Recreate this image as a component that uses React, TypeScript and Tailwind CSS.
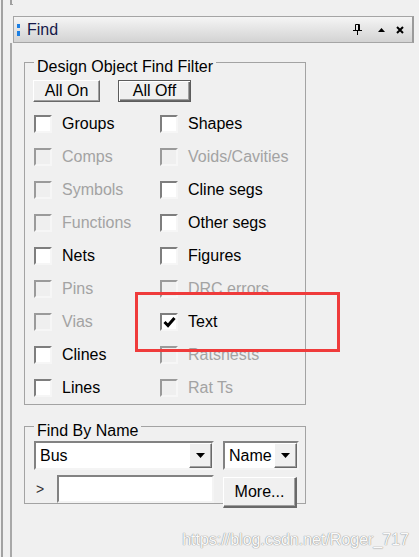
import React from "react";

type Item = { label: string; enabled: boolean; checked?: boolean };

const left: Item[] = [
  { label: "Groups", enabled: true },
  { label: "Comps", enabled: false },
  { label: "Symbols", enabled: false },
  { label: "Functions", enabled: false },
  { label: "Nets", enabled: true },
  { label: "Pins", enabled: false },
  { label: "Vias", enabled: false },
  { label: "Clines", enabled: true },
  { label: "Lines", enabled: true },
];

const right: Item[] = [
  { label: "Shapes", enabled: true },
  { label: "Voids/Cavities", enabled: false },
  { label: "Cline segs", enabled: true },
  { label: "Other segs", enabled: true },
  { label: "Figures", enabled: true },
  { label: "DRC errors", enabled: false },
  { label: "Text", enabled: true, checked: true },
  { label: "Ratsnests", enabled: false },
  { label: "Rat Ts", enabled: false },
];

const raised =
  "border border-t-white border-l-white border-r-[#696969] border-b-[#696969] shadow-[inset_-1px_-1px_0_#a0a0a0] bg-[#f0f0f0]";
const sunken =
  "border-2 border-t-[#828282] border-l-[#828282] border-r-[#f4f4f4] border-b-[#f4f4f4] bg-white";

function CheckRow({ item }: { item: Item }) {
  return (
    <div className="flex h-[33px] items-center gap-[10px]">
      <div
        className={`flex h-[18px] w-[18px] items-center justify-center border-2 border-r-[#f6f6f6] border-b-[#f6f6f6] ${
          item.enabled
            ? "border-t-[#7e7e7e] border-l-[#7e7e7e] bg-white"
            : "border-t-[#9a9a9a] border-l-[#9a9a9a] bg-[#efefef]"
        }`}
      >
        {item.checked && (
          <svg width="13" height="12" viewBox="0 0 13 12">
            <path d="M1.5 6 L5 9.5 L11.5 2" fill="none" stroke="#000" strokeWidth="3" />
          </svg>
        )}
      </div>
      <span className={item.enabled ? "text-black" : "text-[#a3a3a3]"}>{item.label}</span>
    </div>
  );
}

function Arrow() {
  return (
    <div className={`${raised} flex h-full w-[23px] items-center justify-center`}>
      <svg width="9" height="5" viewBox="0 0 9 5">
        <path d="M0 0 H9 L4.5 5 Z" fill="#000" />
      </svg>
    </div>
  );
}

export default function App() {
  return (
    <div
      className="relative flex h-[557px] w-[419px] overflow-hidden bg-[#f0f0f0] text-[16px] leading-[18px]"
      style={{ fontFamily: '"Liberation Sans", Arial, sans-serif' }}
    >
      <div className="ml-px w-[2px] bg-[#a2a2a2]" />
      <div className="w-[7px]" />

      <div className="flex w-[409px] flex-col">
        <div className="h-[16px]">
          <div className="h-[5px] w-[3px] border-b border-l-2 border-[#a0a0a0]" />
        </div>

        {/* title bar */}
        <div className="ml-[3px] flex h-[27px] w-[401px] items-center border border-r-2 border-[#a5a5a5] border-r-[#9a9a9a] bg-linear-to-b from-[#f5f5f5] to-[#d3d3d3] pl-[3px] pr-[8px]">
          <div className="flex flex-col gap-[3px]">
            <div className="h-[4px] w-[3px] bg-[#1b7fe3]" />
            <div className="h-[5px] w-[3px] bg-[#1b7fe3]" />
          </div>
          <span className="ml-[7px] text-[#16194a]">Find</span>
          <div className="ml-auto flex items-center">
            <svg width="11" height="11" viewBox="0 0 11 11">
              <path d="M3.5 0.5 H7.5 V6 M3.5 0.5 V6" fill="none" stroke="#000" strokeWidth="1" />
              <path d="M6.5 1 V6" stroke="#000" strokeWidth="1" />
              <path d="M1 6.5 H10" stroke="#000" strokeWidth="1" />
              <path d="M5.5 7 V11" stroke="#000" strokeWidth="1" />
            </svg>
            <svg className="ml-[15px]" width="7" height="4" viewBox="0 0 7 4">
              <path d="M0 4 H7 L3.5 0 Z" fill="#000" />
            </svg>
            <svg className="ml-[11px]" width="8" height="8" viewBox="0 0 8 8">
              <path d="M1 1 L7 7 M7 1 L1 7" stroke="#000" strokeWidth="2" />
            </svg>
          </div>
        </div>

        {/* body */}
        <div className="flex flex-1 flex-col border-l-2 border-[#a8a8a8] pl-[12px]">
          <div className="mt-[19px] w-[282px] border border-[#a3a3a3]">
            <div className="-mt-[5px] ml-[9px] w-fit bg-[#f0f0f0] px-[3px]">
              Design Object Find Filter
            </div>
            <div className="mt-[4px] flex pl-[8px]">
              <button className={`${raised} h-[22px] w-[67px]`}>All On</button>
              <button className="ml-[18px] h-[22px] w-[73px] border border-[#5c5c5c] bg-[#f0f0f0] shadow-[inset_1px_1px_0_#ffffff,inset_-1px_-1px_0_#696969,inset_-2px_-2px_0_#a0a0a0]">
                All Off
              </button>
            </div>
            <div className="mt-[5px] grid grid-cols-[126px_1fr] pl-[9px]">
              {left.map((item, i) => (
                <React.Fragment key={item.label}>
                  <CheckRow item={item} />
                  <CheckRow item={right[i]} />
                </React.Fragment>
              ))}
            </div>
          </div>

          <div className="mt-[21px] w-[282px] border border-[#a3a3a3]">
            <div className="-mt-[5px] ml-[9px] w-fit bg-[#f0f0f0] px-[3px]">Find By Name</div>
            <div className="mt-[1px] flex gap-[9px] pl-[9px]">
              <div className={`${sunken} flex h-[29px] w-[180px] items-center pl-[4px]`}>
                <span className="flex-1">Bus</span>
                <Arrow />
              </div>
              <div className={`${sunken} flex h-[29px] w-[76px] items-center pl-[4px]`}>
                <span className="flex-1">Name</span>
                <Arrow />
              </div>
            </div>
            <div className="mt-[5px] flex h-[28px] items-start pl-[11px]">
              <span className="mt-[5px] w-[21px] text-[14px] text-[#333]">&gt;</span>
              <div className={`${sunken} h-[28px] w-[157px]`} />
              <button className={`${raised} ml-[9px] mt-[2px] h-[31px] w-[74px] border-r-2 border-b-2`}>
                More...
              </button>
            </div>
          </div>

          <div className="flex-1" />
          <div className="flex justify-end pb-[8px] pr-[10px]">
            <span className="text-[#fafafa] [text-shadow:0_0_1px_#8c8c8c,0_0_1px_#8c8c8c]">
              https://blog.csdn.net/Roger_717
            </span>
          </div>
        </div>
      </div>

      {/* annotation */}
      <div className="absolute left-[135px] top-[292px] h-[60px] w-[205px] border-[3px] border-[#ef3b3b]" />
    </div>
  );
}
